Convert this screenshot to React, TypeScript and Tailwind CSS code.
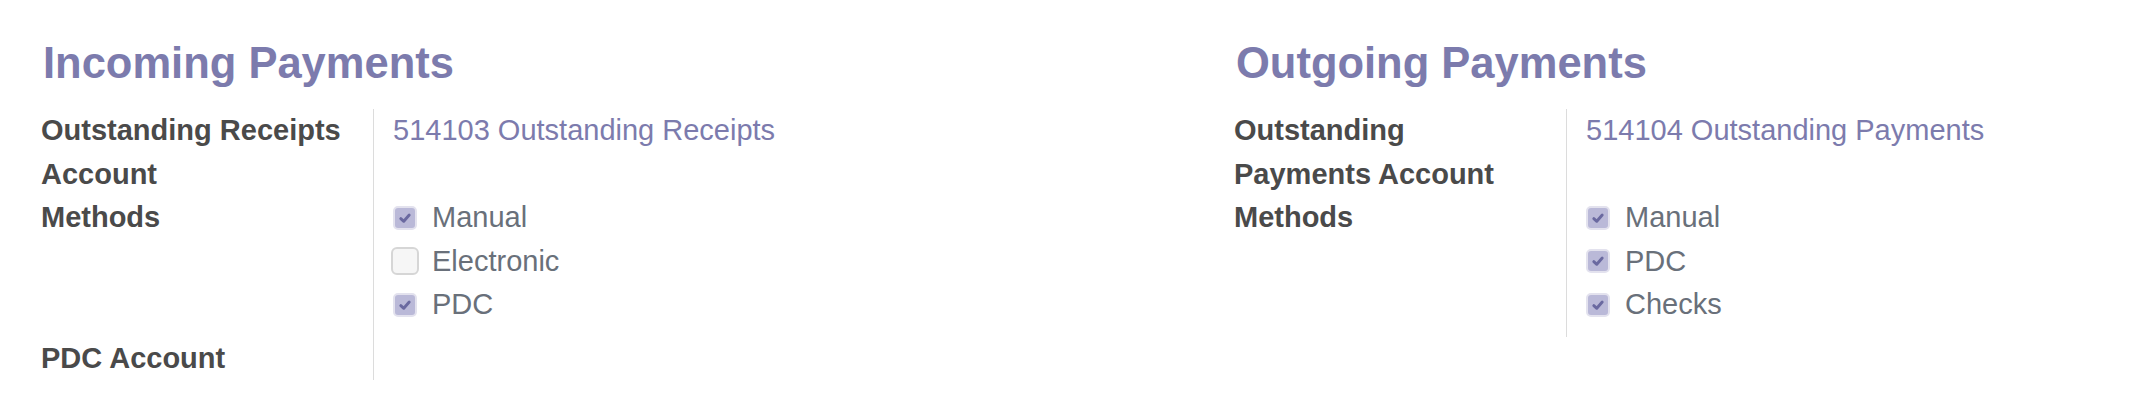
import React from "react";

const Check = ({ checked }: { checked: boolean }) =>
  checked ? (
    <span className="flex h-[24px] w-[24px] items-center justify-center rounded-[5px] border-2 border-[#e3e2ee] bg-[#bab9d8]">
      <svg width="14" height="14" viewBox="0 0 14 14">
        <path d="M2.8 7.6 L5.8 10.3 L11.2 4" fill="none" stroke="#6a69a0" strokeWidth="2.9" strokeLinecap="round" strokeLinejoin="round" />
      </svg>
    </span>
  ) : (
    <span className="-mx-[2px] block h-[28px] w-[28px] rounded-[6px] border-2 border-[#d6d6d6] bg-[#f6f6f6]" />
  );

const Methods = ({ items }: { items: [string, boolean][] }) => (
  <div className="pb-[10px]">
    {items.map(([t, c]) => (
      <div key={t} className="flex h-[43.5px] items-center gap-[15px]">
        <span className="flex w-[24px] justify-center"><Check checked={c} /></span>
        <span className="text-[#69707a]">{t}</span>
      </div>
    ))}
  </div>
);

const Row = ({ label, children }: { label: React.ReactNode; children?: React.ReactNode }) => (
  <div className="flex">
    <div className="w-[332px] shrink-0 pr-[20px] font-bold text-[#4a4a4a]">{label}</div>
    <div className="border-l border-[#dcdcdc] pl-[19px]">{children}</div>
  </div>
);

export default function App() {
  return (
    <div
      className="flex h-[410px] w-[2138px] bg-white pl-[41px] pt-[37px] text-[29px] leading-[43.5px]"
      style={{ fontFamily: '"Liberation Sans", Arial, sans-serif' }}
    >
      <section className="w-[1193px]">
        <h2 className="mb-[20px] ml-[2px] text-[43.5px] font-bold leading-[52px] text-[#7c7bad]">Incoming Payments</h2>
        <Row label="Outstanding Receipts Account">
          <span className="text-[#7c7bad]">514103 Outstanding Receipts</span>
        </Row>
        <Row label="Methods">
          <Methods items={[["Manual", true], ["Electronic", false], ["PDC", true]]} />
        </Row>
        <Row label="PDC Account">
          <div className="h-[41px]" />
        </Row>
      </section>
      <section className="w-[900px]">
        <h2 className="mb-[20px] ml-[2px] text-[43.5px] font-bold leading-[52px] text-[#7c7bad]">Outgoing Payments</h2>
        <Row label="Outstanding Payments Account">
          <span className="text-[#7c7bad]">514104 Outstanding Payments</span>
        </Row>
        <Row label="Methods">
          <Methods items={[["Manual", true], ["PDC", true], ["Checks", true]]} />
        </Row>
      </section>
    </div>
  );
}
